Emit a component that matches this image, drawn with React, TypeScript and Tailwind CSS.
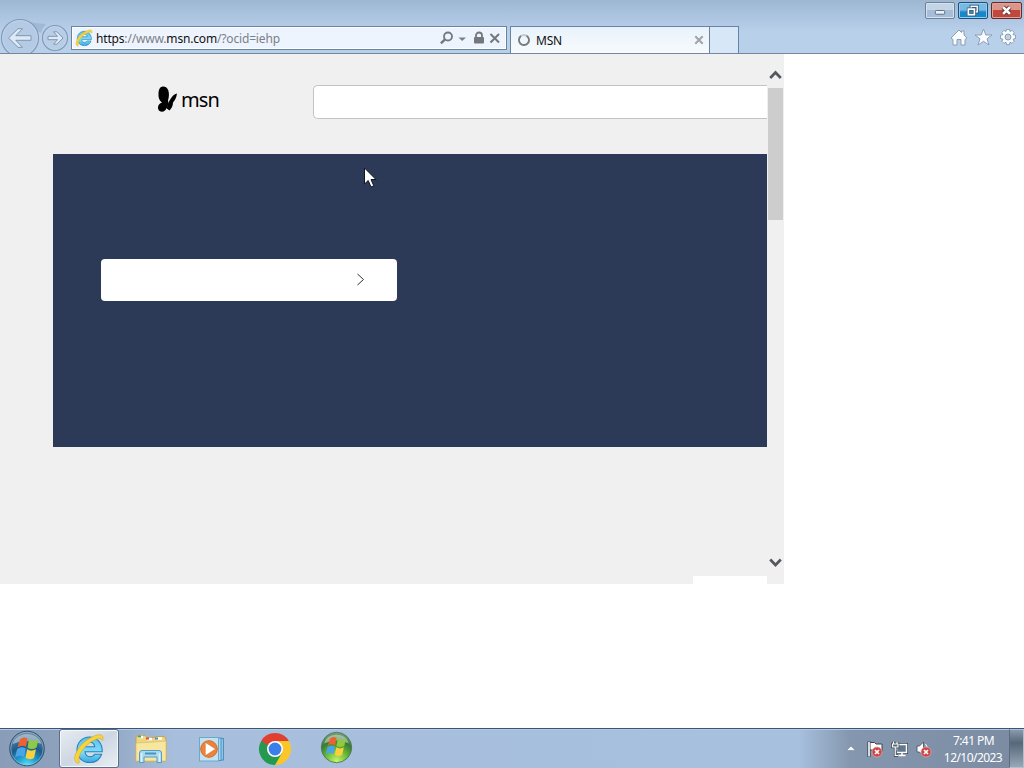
import React from "react";

function IELogo({ size }: { size: number }) {
  return (
    <svg width={size} height={size} viewBox="0 0 32 32" className="shrink-0">
      <defs>
        <linearGradient id="ieBlue" x1="0" y1="0" x2="0" y2="1">
          <stop offset="0" stopColor="#5fbdea" />
          <stop offset=".6" stopColor="#7fdcf8" />
          <stop offset="1" stopColor="#3aa5dc" />
        </linearGradient>
      </defs>
      <path
        fillRule="evenodd"
        d="M16.500 4C24 4 29.500 10 29.200 18.800H12C12.300 22 14 23.700 17 23.700C19.300 23.700 20.800 22.700 21.600 21.200H28.600C26.700 26.700 22.500 29.500 16.800 29.500C9.500 29.500 4 24.500 4 16.800C4 9.400 9.500 4 16.500 4ZM12 13.700H21.700C21.300 10.900 19.600 9.300 16.900 9.300C14.200 9.300 12.400 11 12 13.700Z"
        fill="url(#ieBlue)"
        stroke="#2383bd"
        strokeWidth="1.100"
      />
      <path
        d="M4.500 30.500C-2 27 4 14 14 7C22 1.500 28 .5 29.500 3C30.500 4.500 30 6.500 29.500 7.500C28.500 4 23 5.500 16.500 10C8.500 16 4 24.500 6.500 29.500Z"
        fill="#f8d43a"
        stroke="#d9a81c"
        strokeWidth=".6"
      />
    </svg>
  );
}

function NavButtons() {
  return (
    <svg width="71" height="53" viewBox="0 0 71 53" className="shrink-0">
      <path d="M27 21Q36 24 46 24Q42 28 41 33L37 31Z" fill="#8fa9c6" opacity=".55" />
      <circle cx="20" cy="38" r="18.500" fill="#b5cbe5" stroke="#8099b4" strokeWidth="1.200" />
      <circle cx="20" cy="38" r="17.300" fill="none" stroke="#c0d3e8" strokeWidth=".8" />
      <path
        d="M8.500 38L18 28.700H22.500L15.800 35.700H31V40.300H15.800L22.500 47.300H18Z"
        fill="#dce9f6"
        stroke="#7f97b1"
        strokeLinejoin="round"
      />
      <circle cx="55" cy="38" r="12.500" fill="#b8cee7" stroke="#8099b4" strokeWidth="1.200" />
      <circle cx="55" cy="38" r="11.300" fill="none" stroke="#c0d3e8" strokeWidth=".8" />
      <path
        d="M63 38L57 31.800H53.500L57.500 36.300H48V39.700H57.500L53.500 44.200H57Z"
        fill="#dce9f6"
        stroke="#7f97b1"
        strokeLinejoin="round"
      />
    </svg>
  );
}

function AddressBar() {
  return (
    <div className="mt-[26px] flex h-6 w-[436px] shrink-0 items-center border border-[#6984a0] bg-[#eef4fd] pl-[3px] shadow-[inset_0_0_0_1px_#fff]">
      <IELogo size={18} />
      <div className="ml-[3px] pt-[2px] text-[12px] leading-4 tracking-[-0.17px] whitespace-nowrap text-[#7b8087]">
        <span className="text-[#111]">https</span>://www.
        <span className="text-[#111]">msn.com</span>/?ocid=iehp
      </div>
      <svg width="66" height="20" viewBox="0 0 66 20" className="ml-auto shrink-0">
        <circle cx="8" cy="8.500" r="4" fill="none" stroke="#74777c" strokeWidth="1.800" />
        <path d="M5 11.300L.900 15.400" stroke="#74777c" strokeWidth="2.400" />
        <path d="M18.500 9.500H26L22.200 13Z" fill="#7d8085" />
        <path d="M36 9.500V7.500A3 3 0 0 1 42 7.500V9.500" fill="none" stroke="#74777c" strokeWidth="1.800" />
        <rect x="34" y="9" width="10" height="6.500" rx="1" fill="#74777c" />
        <path d="M50.500 6L59 14.500M59 6L50.500 14.500" stroke="#74777c" strokeWidth="2" />
      </svg>
    </div>
  );
}

function Tabs() {
  return (
    <div className="mt-[26px] ml-[3px] flex h-[28px] shrink-0">
      <div className="flex h-[28px] w-[200px] items-center border border-b-0 border-[#6984a0] bg-linear-to-b from-[#e9f2fb] to-[#f7fbfd] pl-[6px]">
        <svg width="14" height="14" viewBox="0 0 14 14" className="mb-px">
          <circle cx="7" cy="7" r="5" fill="none" stroke="#c4c9ce" strokeWidth="1.800" />
          <path d="M9.500 2.700A5 5 0 1 1 4 3" fill="none" stroke="#777b81" strokeWidth="1.800" />
        </svg>
        <span className="ml-[5px] text-[12px] leading-4 tracking-[-0.2px] text-[#111]">MSN</span>
        <svg width="10" height="10" viewBox="0 0 10 10" className="mr-[5px] mb-px ml-auto">
          <path d="M1.300 1.300L8.700 8.700M8.700 1.300L1.300 8.700" stroke="#a0a4a9" strokeWidth="2" />
        </svg>
      </div>
      <div className="h-[27px] w-[29px] border-t border-r border-[#6984a0] bg-[#d7e7f8]" />
    </div>
  );
}

function WindowControls() {
  return (
    <div className="mr-[2px] flex justify-end gap-[3px] pt-[2px]">
      <div className="flex h-[17px] w-[30px] items-center justify-center rounded-[2px] border border-[#6e8199] bg-linear-to-b from-[#c4d4e7] from-45% to-[#a6bdd8] to-50% shadow-[inset_0_0_0_1px_#d5e2f0]">
        <svg width="30" height="17" viewBox="0 0 30 17">
          <rect x="10" y="8.500" width="10" height="4" rx="1" fill="#eaf1f8" stroke="#586b81" />
        </svg>
      </div>
      <div className="flex h-[17px] w-[30px] items-center justify-center rounded-[2px] border border-[#204e78] bg-linear-to-b from-[#76b9e3] from-45% to-[#1787ca] to-60% shadow-[inset_0_0_0_1px_#8ed1ef]">
        <svg width="30" height="17" viewBox="0 0 30 17">
          <rect x="13" y="4" width="6.500" height="6" fill="none" stroke="#34506b" strokeWidth="3.200" />
          <rect x="13" y="4" width="6.500" height="6" fill="none" stroke="#fff" strokeWidth="1.500" />
          <rect x="10" y="7" width="6.500" height="6" fill="#3288bd" stroke="#34506b" strokeWidth="3.200" />
          <rect x="10" y="7" width="6.500" height="6" fill="none" stroke="#fff" strokeWidth="1.800" />
        </svg>
      </div>
      <div className="flex h-[17px] w-[31px] items-center justify-center rounded-[2px] border border-[#632a27] bg-linear-to-b from-[#dc958b] from-45% to-[#bf473b] to-50% shadow-[inset_0_0_0_1px_#e0a299]">
        <svg width="30" height="17" viewBox="0 0 30 17">
          <path d="M11.500 5L18.500 12M18.500 5L11.500 12" stroke="#68403f" strokeWidth="4.600" />
          <path d="M11.500 5L18.500 12M18.500 5L11.500 12" stroke="#fff" strokeWidth="2.600" />
        </svg>
      </div>
    </div>
  );
}

function BrowserTools() {
  return (
    <svg width="75" height="22" viewBox="0 0 75 22" className="mt-[7px] ml-auto">
      <g fill="#fafdff" stroke="#8496ac" strokeWidth=".9" strokeLinejoin="round">
        <path d="M2 12L10 4L12.500 6.500V5H15V9L18 12L16 13.500V19H12V13.500H8V19H4V13.500Z" />
        <path d="M34.500 3L36.800 9H43L38 12.800L40 19L34.500 15.300L29 19L31 12.800L26 9H32.200Z" />
        <path
          fillRule="evenodd"
          d="M57.500 3.500H60.500L61 5.500L63 4.300L65.200 6.500L64 8.500L66.500 9.300V12.500L64 13.200L65.200 15.200L63 17.400L61 16.200L60.300 18.700H57.700L57 16.200L55 17.400L52.800 15.200L54 13.200L51.500 12.500V9.300L54 8.500L52.800 6.500L55 4.300L57 5.500ZM59 8A3 3 0 1 0 59 14A3 3 0 1 0 59 8Z"
        />
      </g>
    </svg>
  );
}

function BrowserHeader() {
  return (
    <header className="flex h-[54px] items-start overflow-hidden border-b border-[#74889d] bg-linear-to-b from-[#9db7d2] to-[#b9d0eb] to-60%">
      <NavButtons />
      <AddressBar />
      <Tabs />
      <div className="ml-auto flex flex-col">
        <WindowControls />
        <BrowserTools />
      </div>
    </header>
  );
}

function MsnLogo() {
  return (
    <div className="ml-[157px] flex h-[30px] w-[156px] shrink-0 items-center">
      <svg width="21" height="28" viewBox="0 0 21 28" className="mb-[2px] shrink-0">
        <path d="M3 3C5 .5 9.500 1 11.200 5C12.400 8.500 12 12 11 15.500C12 18 10.500 23 8 25.500C5.500 27.800 2 26.800 1.200 24C.5 21 2 18.500 5 17.500C2 15.500 1.200 12 1.500 8C1.700 5.500 2 4.500 3 3Z" />
        <path d="M20 8.500C19.500 13 17.500 15.500 16 17.500C16 20.500 14.500 23.500 12.500 25.500L9.800 23.500C10.200 20 11.500 17 13.500 14C15 11.500 17 9 20 8.500Z" />
      </svg>
      <span className="ml-[3px] text-[20px] leading-6 tracking-[-0.9px] text-black">msn</span>
    </div>
  );
}

function Page() {
  return (
    <main className="flex h-[530px] w-[784px] bg-[#f0f0f0]">
      <div className="flex w-[767px] flex-col overflow-hidden">
        <div className="flex h-[100px] items-start pt-[31px]">
          <MsnLogo />
          <div className="h-[34px] grow rounded-l-[5px] border border-r-0 border-[#c1c3ca] bg-white" />
        </div>
        <section className="ml-[53px] h-[293px] bg-[#2c3a57] pt-[105px] pl-[48px]">
          <div className="flex h-[42px] w-[296px] items-center justify-end rounded-[4px] bg-white pr-[31px]">
            <svg width="10" height="14" viewBox="0 0 10 14">
              <path d="M1.500 1L7.500 6.500L1.500 12" fill="none" stroke="#333" strokeWidth="1" />
            </svg>
          </div>
        </section>
        <div className="mt-auto ml-auto h-[8px] w-[74px] bg-white" />
      </div>
      <div className="flex w-[17px] flex-col items-start">
        <svg width="17" height="34" viewBox="0 0 17 34" className="shrink-0">
          <path d="M3.200 24L8.500 18.500L13.800 24" fill="none" stroke="#55585c" strokeWidth="2.700" />
        </svg>
        <div className="ml-px h-[132px] w-[15px] bg-[#cdcdcd]" />
        <svg width="17" height="34" viewBox="0 0 17 34" className="mt-auto shrink-0">
          <path d="M3.200 9.500L8.500 15L13.800 9.500" fill="none" stroke="#55585c" strokeWidth="2.700" />
        </svg>
      </div>
    </main>
  );
}

function WindowsFlag() {
  return (
    <g>
      <path d="M11 10Q14.500 6.500 18.500 9L17 17.500Q13 15 8.500 18Z" fill="#ed6132" />
      <path d="M20 10Q24 13 29.500 9.500L27.500 18Q22.500 21 18.500 18Z" fill="#8fca42" />
      <path d="M8.200 19.500Q12.500 16.500 16.700 19L15 27.500Q10.500 25 6 28Z" fill="#4aa5e8" />
      <path d="M18.200 19.800Q22 22.500 27 19.700L25 28.500Q20.500 31 16.500 28.300Z" fill="#fccf3c" />
    </g>
  );
}

function StartOrb() {
  return (
    <svg width="38" height="38" viewBox="0 0 38 38" className="mt-px ml-[8px] shrink-0">
      <defs>
        <radialGradient id="orb" cx=".5" cy="1" r=".95">
          <stop offset="0" stopColor="#5fe6fb" />
          <stop offset=".3" stopColor="#1f9fd0" />
          <stop offset=".6" stopColor="#1c5b8c" />
          <stop offset="1" stopColor="#6b8ba5" />
        </radialGradient>
      </defs>
      <circle cx="19" cy="18.500" r="17.300" fill="url(#orb)" stroke="#36526f" strokeWidth="1" />
      <circle cx="19" cy="18.500" r="16.300" fill="none" stroke="#a5c6da" strokeWidth=".8" opacity=".7" />
      <path d="M4.500 14C8 .5 30 .5 33.500 14Q19 8 4.500 14Z" fill="#dce7ed" opacity=".5" />
      <g transform="translate(1 -.5)">
        <WindowsFlag />
      </g>
    </svg>
  );
}

function FolderIcon() {
  return (
    <svg width="34" height="32" viewBox="0 0 34 32" className="shrink-0">
      <path d="M2 4L4 2.500H11L13 4.500H20L22 3.500H30L32 6V28H2Z" fill="#eed680" stroke="#c3a54d" />
      <path d="M4 4H9M13 6H18M22 5.500H28" stroke="#fff" strokeWidth="2.500" />
      <path d="M4 3.500H7" stroke="#43a655" strokeWidth="2" />
      <path d="M12 5.500H15" stroke="#d65036" strokeWidth="2" />
      <path d="M21 5.500H24" stroke="#438bc3" strokeWidth="2" />
      <path d="M2 10L20 9L32 8V28H2Z" fill="#f6e6a0" stroke="#d9bd67" strokeWidth=".7" />
      <path d="M5.500 29.500V20Q5.500 17.500 8 17.500H25Q27.500 17.500 27.500 20V29.500H23V24H10V29.500Z" fill="#a8daf1" stroke="#579cc6" />
      <path d="M11 20.500H22" stroke="#4b92bf" strokeWidth="2" />
      <path d="M7.500 20V29M25.500 20V29" stroke="#d9f1fa" strokeWidth="1.500" />
    </svg>
  );
}

function MediaIcon() {
  return (
    <svg width="29" height="28" viewBox="0 0 29 28" className="shrink-0">
      <rect x="6.500" y="3.500" width="19" height="21.500" fill="#8dc4e7" stroke="#508ebf" />
      <rect x="4" y="3" width="19" height="22.500" fill="#a9d7ee" stroke="#4d91be" />
      <rect x="1.500" y="2.500" width="19" height="23.500" fill="#c2e2f0" stroke="#6ba9cc" />
      <circle cx="11" cy="14" r="8.300" fill="#e8843e" stroke="#d36a2a" />
      <path d="M7.700 8L17 14L7.700 20Z" fill="#fff" />
    </svg>
  );
}

function ChromeIcon() {
  return (
    <svg width="34" height="34" viewBox="0 0 34 34" className="shrink-0">
      <path d="M17 17L3.140 9A16 16 0 0 1 30.860 9Z" fill="#df4032" />
      <path d="M17 17L30.860 9A16 16 0 0 1 17 33Z" fill="#fbc728" />
      <path d="M17 17L17 33A16 16 0 0 1 3.140 9Z" fill="#249a50" />
      <path d="M17 9H30.860L24 21Z" fill="#fbc728" />
      <path d="M10 21L3.140 9L17 9Z" fill="#df4032" />
      <path d="M3.140 9L10 21L17 25L17 17Z" fill="#249a50" />
      <path d="M24 21L17 33L10 21Z" fill="#249a50" />
      <circle cx="17" cy="17" r="8" fill="#fff" />
      <circle cx="17" cy="17" r="6.400" fill="#397ee9" />
    </svg>
  );
}

function GreenOrb() {
  return (
    <svg width="33" height="33" viewBox="0 0 38 38" className="shrink-0">
      <defs>
        <radialGradient id="greenOrb" cx=".5" cy=".95" r=".95">
          <stop offset="0" stopColor="#c9f56a" />
          <stop offset=".4" stopColor="#67b936" />
          <stop offset=".7" stopColor="#3a7c34" />
          <stop offset="1" stopColor="#7fa283" />
        </radialGradient>
      </defs>
      <circle cx="19" cy="19" r="17.500" fill="url(#greenOrb)" stroke="#487559" />
      <path d="M5 14C8 1 30 1 33 14Q19 8 5 14Z" fill="#dce9dc" opacity=".5" />
      <g transform="translate(.5 -1)">
        <WindowsFlag />
      </g>
    </svg>
  );
}

function ErrorBadge({ x, y }: { x: number; y: number }) {
  return (
    <g>
      <circle cx={x} cy={y} r="5" fill="#cf4543" stroke="#e3a9aa" strokeWidth=".7" />
      <path
        d={`M${x - 2} ${y - 2}L${x + 2} ${y + 2}M${x + 2} ${y - 2}L${x - 2} ${y + 2}`}
        stroke="#fff"
        strokeWidth="1.700"
      />
    </g>
  );
}

function Tray() {
  return (
    <div className="ml-auto flex h-full items-center">
      <svg width="90" height="20" viewBox="0 0 90 20" className="mt-px mr-[8px]">
        <path d="M3.500 11.500L8 7L12.500 11.500Z" fill="#f4f8fc" stroke="#69788b" strokeWidth=".5" />
        <path d="M26 2.500V18" stroke="#39434f" strokeWidth="3.200" />
        <path d="M27 3.500H31.500L33 5H39V12.500H31L30 11H27Z" fill="#fff" stroke="#39434f" strokeWidth="1" />
        <path d="M26 3V17.500" stroke="#fff" strokeWidth="1.600" />
        <ErrorBadge x={34} y={13} />
        <rect x="53.500" y="5.500" width="10" height="8" fill="#53687a" stroke="#39434f" strokeWidth="3" />
        <rect x="53.500" y="5.500" width="10" height="8" fill="#62788c" stroke="#fff" strokeWidth="1.500" />
        <path d="M55.500 16.500H62.500M59 14V17" stroke="#fff" strokeWidth="1.500" />
        <path d="M50.500 2.500V5M54 2.500V5M49.500 5H55V8H49.500ZM52.200 8V16.500H55" fill="#53687a" stroke="#39434f" strokeWidth="2.600" />
        <path d="M50.500 2.500V5M54 2.500V5M49.500 5H55V8H49.500ZM52.200 8V16.500H55" fill="#53687a" stroke="#fff" strokeWidth="1.200" />
        <path d="M74 7H76.500L80.500 3V17L76.500 13H74Z" fill="#fff" stroke="#4c5764" strokeWidth=".9" />
        <path d="M82.500 5Q85 8 84 11" fill="none" stroke="#fff" />
        <ErrorBadge x={83} y={13} />
      </svg>
      <div className="w-[63px] text-center text-[12px] leading-[17px] tracking-[-0.55px] whitespace-nowrap text-white">
        <div className="pl-[2px]">7:41 PM</div>
        <div className="pl-px">12/10/2023</div>
      </div>
      <div className="ml-[5px] h-full w-[15px] border border-[#b0bfce] border-l-[#5b6c81] bg-linear-to-b from-[#8a9aad] via-[#566879] via-35% to-[#98a8b8]" />
    </div>
  );
}

function Taskbar() {
  return (
    <footer className="mt-auto flex h-10 items-center border-t border-[#36577a] bg-[linear-gradient(to_right,#8a9db8_0%,#91a5c0_10%,#a7bfdd_17%,#a7c0de_78%,#8597ae_83%,#7a8ba2_100%)] shadow-[inset_0_1px_0_#bacadd]">
      <StartOrb />
      <div className="ml-[13px] flex h-[39px] w-[60px] shrink-0 items-center justify-center rounded-[3px] border border-[#596e88] bg-linear-to-br from-[#e7ecf2] via-[#cdd7e3] to-[#e9eef3] shadow-[inset_0_0_0_1px_#f5f8fb]">
        <IELogo size={32} />
      </div>
      <div className="ml-[15px] flex items-center pt-px">
        <FolderIcon />
        <div className="ml-[30px]">
          <MediaIcon />
        </div>
        <div className="ml-[31px] pb-px">
          <ChromeIcon />
        </div>
        <div className="ml-[28px] pb-[3px]">
          <GreenOrb />
        </div>
      </div>
      <Tray />
    </footer>
  );
}

function Pointer() {
  return (
    <svg width="14" height="22" viewBox="0 0 14 22" className="absolute top-[167px] left-[363px]">
      <path
        d="M1.500 1V17L5.200 13.500L8 20L10.800 18.800L8 12.500H13Z"
        fill="#fff"
        stroke="#111722"
        strokeLinejoin="round"
      />
    </svg>
  );
}

export default function App() {
  return (
    <div className="relative flex h-[768px] w-[1024px] flex-col overflow-hidden bg-white font-['Noto_Sans','Open_Sans',sans-serif]">
      <BrowserHeader />
      <Page />
      <Taskbar />
      <Pointer />
    </div>
  );
}
